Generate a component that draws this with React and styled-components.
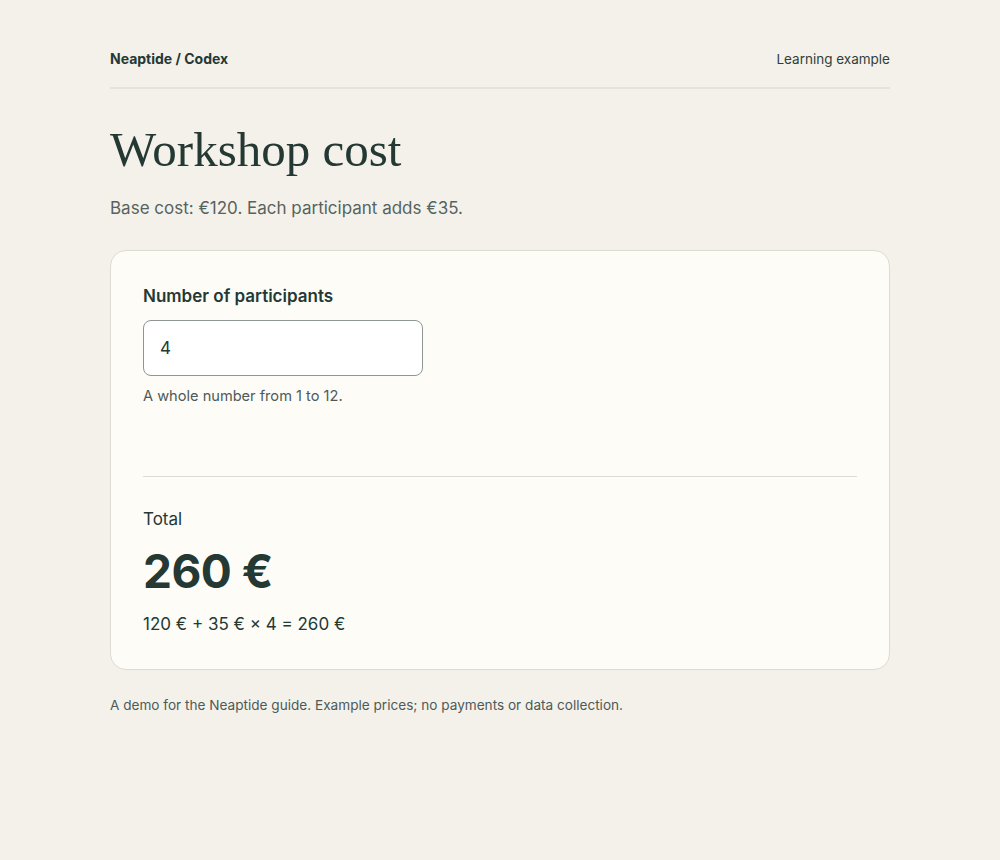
import styled, { createGlobalStyle } from "styled-components"

const GlobalStyle = createGlobalStyle`
    body {
        margin: 0;
        background: #f4f1ea;
        font-family: Inter, "Noto Sans", sans-serif;
        color: #243834;
    }
`
const Page = styled.div`
    width: 780px;
    margin: 0 auto;
    padding: 50px 0 60px;
`
const Header = styled.header`
    display: flex;
    justify-content: space-between;
    align-items: center;
    padding-bottom: 20px;
    border-bottom: 2px solid #e6e3dc;
    font-size: 14px;
`
const Brand = styled.div`
    font-weight: 700;
`
const Tag = styled.div`
    color: #2f3f3b;
    font-size: 13.5px;
`
const Title = styled.h1`
    font-family: "Liberation Serif", "DejaVu Serif", serif;
    font-weight: 400;
    font-size: 49px;
    margin: 32px 0 0;
    line-height: 1.2;
`
const Lead = styled.p`
    font-size: 17px;
    color: #566360;
    margin: 18px 0 0;
`
const Card = styled.section`
    margin-top: 32px;
    background: #fdfcf7;
    border: 1px solid #dedbd3;
    border-radius: 16px;
    padding: 35px 32px 35px;
`
const Label = styled.label`
    display: block;
    font-size: 17px;
    font-weight: 600;
`
const Input = styled.input`
    display: block;
    box-sizing: border-box;
    margin-top: 14px;
    width: 280px;
    height: 56px;
    padding: 0 16px;
    border: 1px solid #8f9592;
    border-radius: 8px;
    background: #fff;
    font-family: inherit;
    font-size: 17px;
    color: #243834;
`
const Hint = styled.p`
    font-size: 14.6px;
    color: #4d5a57;
    margin: 11px 0 0;
`
const Divider = styled.hr`
    border: none;
    border-top: 1px solid #dedbd3;
    margin: 71px 0 0;
`
const TotalLabel = styled.div`
    margin-top: 32px;
    font-size: 17px;
`
const Amount = styled.div`
    margin-top: 14px;
    font-size: 46px;
    font-weight: 700;
    letter-spacing: -0.5px;
`
const Formula = styled.div`
    margin-top: 15px;
    font-size: 17px;
`
const Footer = styled.footer`
    margin-top: 27px;
    font-size: 13.6px;
    color: #4d5a57;
`

export default function App() {
    const base = 120
    const each = 35
    const count = 4
    const total = base + each * count

    return (
        <>
            <GlobalStyle />
            <Page>
                <Header>
                    <Brand>Neaptide / Codex</Brand>
                    <Tag>Learning example</Tag>
                </Header>
                <Title>Workshop cost</Title>
                <Lead>Base cost: €{base}. Each participant adds €{each}.</Lead>
                <Card>
                    <Label htmlFor="participants">Number of participants</Label>
                    <Input id="participants" type="text" defaultValue={count} />
                    <Hint>A whole number from 1 to 12.</Hint>
                    <Divider />
                    <TotalLabel>Total</TotalLabel>
                    <Amount>{total} €</Amount>
                    <Formula>{base} € + {each} € × {count} = {total} €</Formula>
                </Card>
                <Footer>A demo for the Neaptide guide. Example prices; no payments or data collection.</Footer>
            </Page>
        </>
    )
}
